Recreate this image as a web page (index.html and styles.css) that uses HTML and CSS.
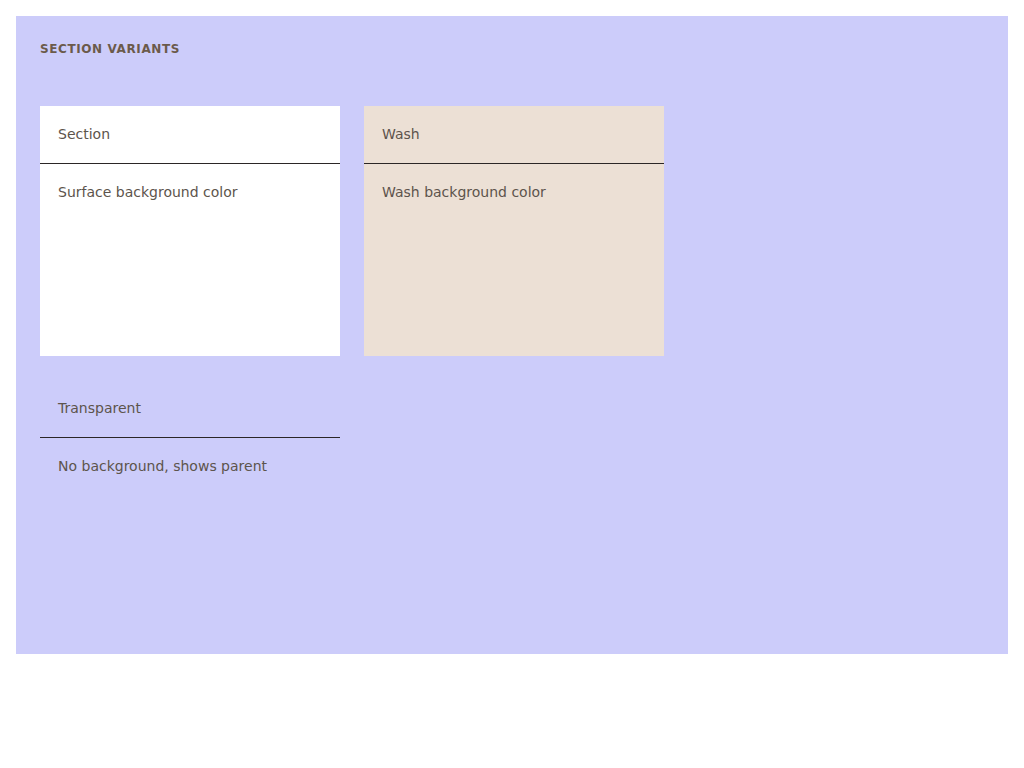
FILE: index.html
```html
<!DOCTYPE html>
<html lang="en">
<head>
<meta charset="utf-8">
<title>Section variants</title>
<link rel="stylesheet" href="styles.css">
</head>
<body>
  <main class="demo">
    <h2 class="demo-title">SECTION VARIANTS</h2>
    <div class="grid">
      <section class="panel panel--surface">
        <header class="panel-head">Section</header>
        <div class="panel-body">Surface background color</div>
      </section>
      <section class="panel panel--wash">
        <header class="panel-head">Wash</header>
        <div class="panel-body">Wash background color</div>
      </section>
      <section class="panel panel--transparent">
        <header class="panel-head">Transparent</header>
        <div class="panel-body">No background, shows parent</div>
      </section>
    </div>
  </main>
</body>
</html>
```

FILE: styles.css
```css
body {
  margin: 16px;
  background: #ffffff;
  font-family: "DejaVu Sans", sans-serif;
}

.demo {
  background: #ccccfa;
  padding: 24px;
  height: 590px;
}

.demo-title {
  margin: 0 0 48px;
  font-size: 12px;
  line-height: 18px;
  font-weight: bold;
  letter-spacing: 0.6px;
  color: #6b5a4a;
}

.grid {
  display: grid;
  grid-template-columns: repeat(2, 300px);
  grid-auto-rows: 250px;
  gap: 24px;
}

.panel {
  display: flex;
  flex-direction: column;
  color: #5d544c;
  font-size: 14px;
  line-height: 21px;
}

.panel--surface { background: #ffffff; }
.panel--wash { background: #ece0d5; }
.panel--transparent { background: transparent; }

.panel-head {
  padding: 18px 18px;
  border-bottom: 1px solid #2b2626;
}

.panel-body {
  padding: 18px 18px;
}
```
